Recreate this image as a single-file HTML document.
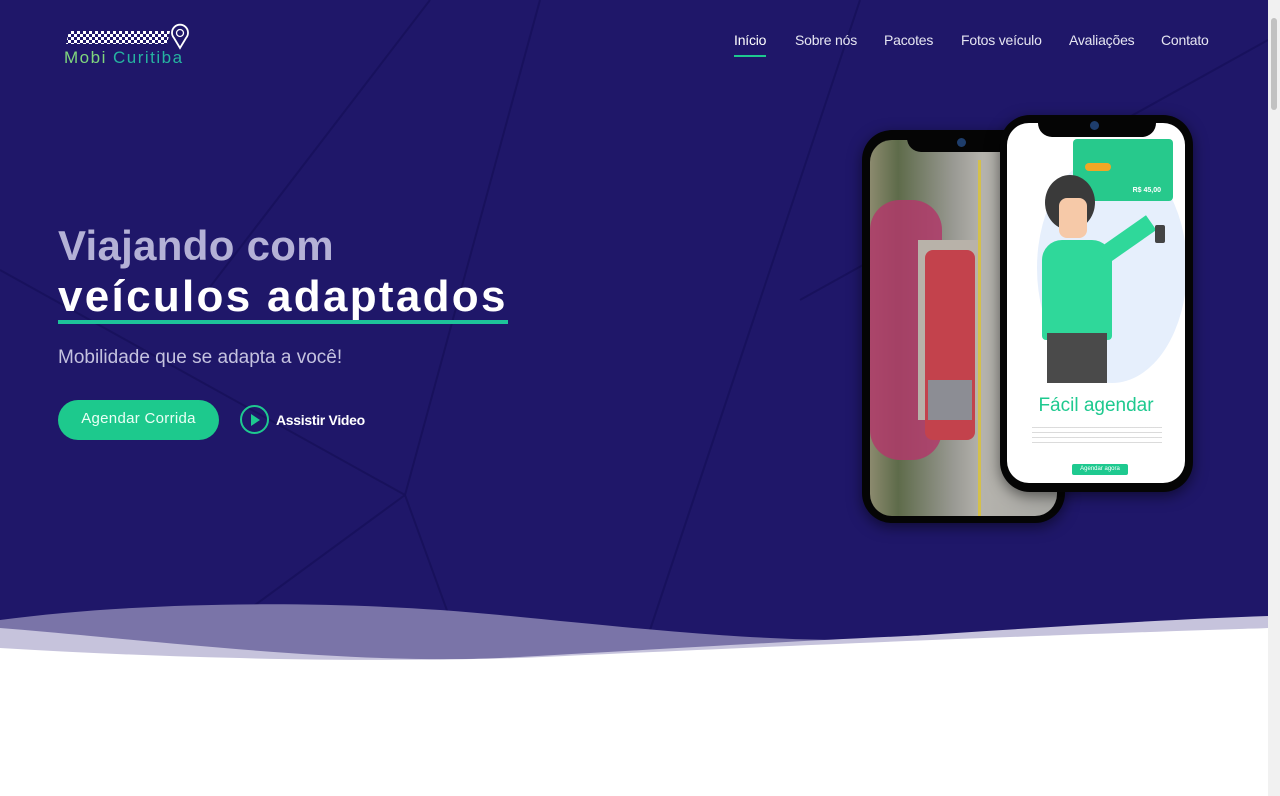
<!DOCTYPE html>
<html><head><meta charset="utf-8"><style>
*{margin:0;padding:0;box-sizing:border-box}
body{width:1280px;height:796px;overflow:hidden;background:#fff;font-family:"Liberation Sans",sans-serif;position:relative}
.hero{position:absolute;left:0;top:0;width:1268px;height:660px;background:#1f1769;overflow:hidden}
.sb{position:absolute;right:0;top:0;width:12px;height:796px;background:#f1f1f1}
.sb i{position:absolute;left:3px;top:18px;width:6px;height:92px;background:#c1c1c1;border-radius:3px}
nav span{position:absolute;top:32px;color:#e6e6f2;font-size:14px;letter-spacing:-.2px;white-space:nowrap}
nav span.a{color:#fff}
nav span.a:after{content:"";position:absolute;left:0;right:0;bottom:-9px;height:2px;background:#1ec98f}
h1{position:absolute;left:58px;top:222px;font-size:42px;color:#b4b1d6;font-weight:bold;letter-spacing:.3px}
h2{position:absolute;left:58px;top:274px;font-size:44px;color:#fff;font-weight:bold;letter-spacing:2.3px;border-bottom:4px solid #1ec39a;line-height:46px;white-space:nowrap}
.sub{position:absolute;left:58px;top:347px;font-size:19px;color:#c4c2df}
.btn{position:absolute;left:58px;top:400px;width:161px;height:40px;border-radius:20px;background:#1dc98d;color:#eafff5;font-size:15px;text-align:center;line-height:38px;letter-spacing:.3px}
.vid{position:absolute;left:240px;top:405px;display:flex;align-items:center;gap:7px;color:#fff;font-weight:bold;font-size:14px;letter-spacing:-.3px}
.vid b{width:29px;height:29px;border:2px solid #1ec98f;border-radius:50%;position:relative;display:block}
.vid b:after{content:"";position:absolute;left:9px;top:7px;border-left:9px solid #1ec98f;border-top:6px solid transparent;border-bottom:6px solid transparent}
.ph{position:absolute;background:#050505;border-radius:30px;box-shadow:0 4px 14px rgba(0,0,0,.5)}
</style></head><body>
<div class="hero">
<svg width="1268" height="660" style="position:absolute;left:0;top:0">
<g stroke="#17105a" stroke-width="2" fill="none" opacity=".8">
<line x1="540" y1="0" x2="405" y2="495"/><line x1="405" y1="495" x2="0" y2="270"/><line x1="405" y1="495" x2="465" y2="660"/>
<line x1="405" y1="495" x2="180" y2="660"/><line x1="860" y1="0" x2="640" y2="660"/><line x1="1268" y1="40" x2="800" y2="300"/>
<line x1="430" y1="0" x2="200" y2="300"/></g>
<path d="M0 620 C150 600 350 600 500 615 C650 630 750 640 850 640 L1268 618 L1268 660 L0 660Z" fill="#7a74a8"/>
<path d="M0 628 C150 640 350 665 500 658 C650 650 800 640 1000 632 L1268 628 L1268 660 L0 660Z" fill="#c6c3dc"/>
<path d="M0 648 C200 660 380 662 520 658 C700 650 900 640 1268 628 L1268 660 L0 660Z" fill="#fff"/>
<path d="M850 640 C1000 630 1150 620 1268 616 L1268 628 C1100 632 950 640 850 640Z" fill="#c6c3dc"/>
</svg>
<svg width="140" height="50" style="position:absolute;left:62px;top:22px">
<defs><pattern id="ck" width="6" height="6" patternUnits="userSpaceOnUse"><rect width="6" height="6" fill="#1f1769"/><rect width="3" height="3" fill="#fff"/><rect x="3" y="3" width="3" height="3" fill="#fff"/></pattern></defs>
<path d="M7 9 L108 9 L105 22 L4 22Z" fill="url(#ck)"/>
<path d="M118 26 L112 16 A8 8 0 1 1 124 16 Z" fill="none" stroke="#fff" stroke-width="1.8"/>
<circle cx="118" cy="11" r="3.5" fill="none" stroke="#fff" stroke-width="1.3"/>
<text x="2" y="41" font-family="Liberation Sans" font-size="17" fill="#7fd67d" letter-spacing="1.5">Mobi</text>
<text x="51" y="41" font-family="Liberation Sans" font-size="17" fill="#26b3a0" letter-spacing="1.5">Curitiba</text>
</svg>
<nav><span class="a" style="left:734px">Início</span><span style="left:795px">Sobre nós</span><span style="left:884px">Pacotes</span><span style="left:961px">Fotos veículo</span><span style="left:1069px">Avaliações</span><span style="left:1161px">Contato</span></nav>
<h1>Viajando com</h1>
<h2>veículos adaptados</h2>
<div class="sub">Mobilidade que se adapta a você!</div>
<div class="btn">Agendar Corrida</div>
<div class="vid"><b></b>Assistir Video</div>

<div class="ph" style="left:862px;top:130px;width:203px;height:393px">
<div style="position:absolute;left:8px;top:10px;width:187px;height:376px;border-radius:22px;overflow:hidden;background:linear-gradient(90deg,#8b8a6e 0%,#5e6b4a 15%,#9a9a94 45%,#b5b3ad 60%,#a6a6a2 100%)">
<div style="position:absolute;left:0;top:60px;width:72px;height:260px;background:#b03a6a;border-radius:30px;opacity:.85"></div>
<div style="position:absolute;left:48px;top:100px;width:60px;height:180px;background:#b8b2a9"></div>
<div style="position:absolute;left:55px;top:110px;width:50px;height:190px;background:#c3424c;border-radius:8px"></div>
<div style="position:absolute;left:58px;top:240px;width:44px;height:40px;background:#8c8d94"></div>
<div style="position:absolute;left:108px;top:20px;width:3px;height:356px;background:#d5c04a"></div>
</div>
<div style="position:absolute;left:45px;top:0;width:110px;height:22px;background:#050505;border-radius:0 0 14px 14px"></div>
<div style="position:absolute;left:95px;top:8px;width:9px;height:9px;border-radius:50%;background:#1e3d6b"></div>
</div>

<div class="ph" style="left:1000px;top:115px;width:193px;height:377px">
<div style="position:absolute;left:7px;top:8px;width:178px;height:360px;border-radius:22px;overflow:hidden;background:#fff">
<div style="position:absolute;left:30px;top:30px;width:150px;height:230px;background:#e6effc;border-radius:50%"></div>
<div style="position:absolute;left:66px;top:16px;width:100px;height:62px;background:#27c98c;border-radius:4px;color:#fff;font-size:7px;font-weight:bold;text-align:right;padding:48px 12px 0 0;line-height:8px">R$ 45,00</div>
<div style="position:absolute;left:78px;top:40px;width:26px;height:8px;background:#f0a726;border-radius:4px"></div>
<div style="position:absolute;left:38px;top:52px;width:50px;height:55px;background:#3a3a3a;border-radius:50%"></div>
<div style="position:absolute;left:52px;top:75px;width:28px;height:40px;background:#f6c9a8;border-radius:8px"></div>
<div style="position:absolute;left:35px;top:117px;width:70px;height:100px;background:#2fd89a;border-radius:20px 20px 4px 4px"></div>
<div style="position:absolute;left:95px;top:125px;width:60px;height:18px;background:#2fd89a;transform:rotate(-35deg);transform-origin:left"></div>
<div style="position:absolute;left:40px;top:210px;width:60px;height:50px;background:#4a4a4a"></div>
<div style="position:absolute;left:148px;top:102px;width:10px;height:18px;background:#444;border-radius:2px"></div>
<div style="position:absolute;left:0;top:272px;width:178px;text-align:center;font-size:19px;color:#1ec98f">Fácil agendar</div>
<div style="position:absolute;left:25px;top:302px;width:130px;height:20px;background:repeating-linear-gradient(#fff 0 2px,#ccc 2px 3px,#fff 3px 5px);opacity:.7"></div>
<div style="position:absolute;left:65px;top:341px;width:56px;height:11px;background:#1ec98f;border-radius:2px;color:#fff;font-size:6px;text-align:center;line-height:11px">Agendar agora</div>
</div>
<div style="position:absolute;left:38px;top:0;width:118px;height:22px;background:#050505;border-radius:0 0 14px 14px"></div>
<div style="position:absolute;left:90px;top:6px;width:9px;height:9px;border-radius:50%;background:#1e3d6b"></div>
</div>
</div>
<div class="sb"><i></i></div>
</body></html>
